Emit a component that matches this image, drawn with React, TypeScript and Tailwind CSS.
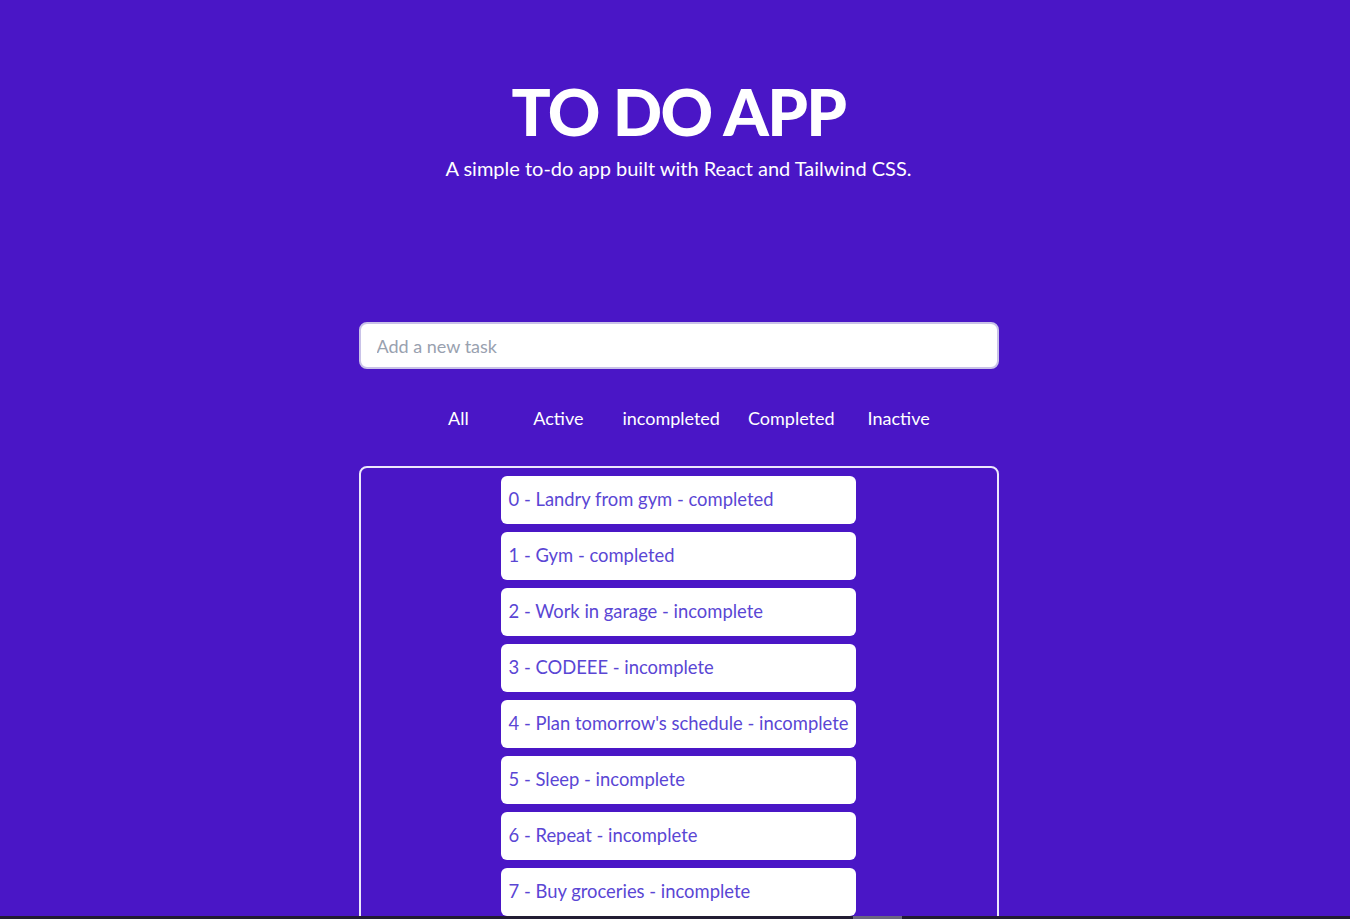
import { useState } from 'react';

const tasks = [
  { id: 0, title: 'Landry from gym', done: true },
  { id: 1, title: 'Gym', done: true },
  { id: 2, title: 'Work in garage', done: false },
  { id: 3, title: 'CODEEE', done: false },
  { id: 4, title: "Plan tomorrow's schedule", done: false },
  { id: 5, title: 'Sleep', done: false },
  { id: 6, title: 'Repeat', done: false },
  { id: 7, title: 'Buy groceries', done: false },
];

const filters = ['All', 'Active', 'incompleted', 'Completed', 'Inactive'];

export default function App() {
  const [text, setText] = useState('');

  return (
    <div
      className="min-h-screen bg-[#4a16c6] text-white pl-[7px]"
      style={{ fontFamily: 'Lato, "Open Sans", sans-serif' }}
    >
      {/* Header */}
      <header className="pt-[79px] flex flex-col items-center">
        <h1 className="text-[65px] leading-[64px] font-black tracking-tight">TO DO APP</h1>
        <p className="mt-[11px] text-xl leading-7">A simple to-do app built with React and Tailwind CSS.</p>
      </header>

      <main className="mx-auto w-[640px] pt-[140px]">
        {/* Input */}
        <input
          value={text}
          onChange={(e) => setText(e.target.value)}
          placeholder="Add a new task"
          className="w-full h-[47px] rounded-lg border-2 border-[#c9c2e8] bg-white px-4 text-lg text-gray-700 placeholder:text-gray-400 outline-none"
        />

        {/* Filters */}
        <div className="mt-[35px] flex justify-center gap-5">
          {filters.map((f) => (
            <button key={f} className="min-w-20 px-1 text-lg leading-7 text-white">
              {f}
            </button>
          ))}
        </div>

        {/* List */}
        <div className="mt-[34px] rounded-lg border-2 border-[#ece8fb] p-2 flex justify-center h-[600px]">
          <ul className="flex flex-col gap-2">
            {tasks.map((t) => (
              <li
                key={t.id}
                className="rounded-md bg-white px-2 pt-[11px] pb-[13px] text-[18.4px] leading-6 text-[#5a46d4] whitespace-nowrap"
              >
                {t.id} - {t.title} - {t.done ? 'completed' : 'incomplete'}
              </li>
            ))}
          </ul>
        </div>
      </main>

      {/* Horizontal scrollbar strip */}
      <div className="fixed bottom-0 left-0 right-0 h-[3px] bg-[#221c33]">
        <div className="absolute left-[853px] w-[49px] h-full bg-[#6b6680]" />
      </div>
    </div>
  );
}
